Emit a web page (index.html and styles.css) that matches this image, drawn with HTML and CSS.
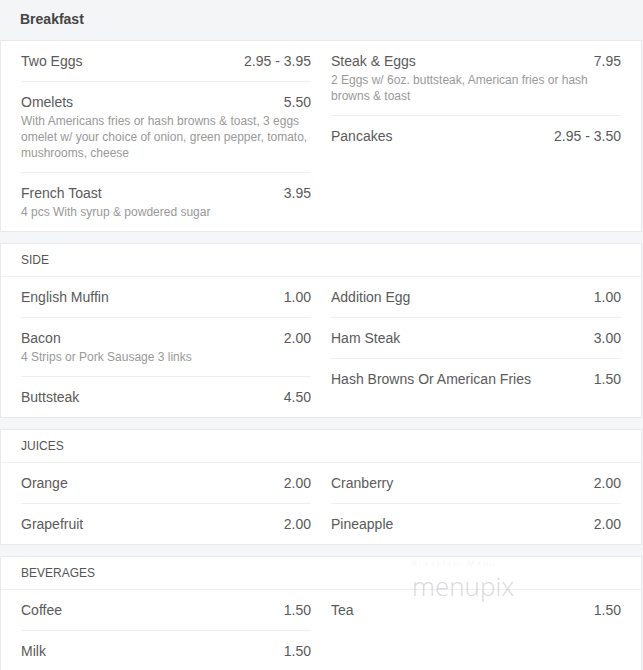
FILE: index.html
```html
<!DOCTYPE html>
<html lang="en">
<head>
<meta charset="utf-8">
<title>Breakfast Menu</title>
<link rel="stylesheet" href="styles.css">
</head>
<body>
<div class="menu">
  <div class="menu-title">Breakfast</div>

  <section class="card">
    <div class="grid">
      <div class="col">
        <div class="item"><div class="row"><span class="name">Two Eggs</span><span class="price">2.95 - 3.95</span></div></div>
        <div class="item"><div class="row"><span class="name">Omelets</span><span class="price">5.50</span></div><p class="desc">With Americans fries or hash browns &amp; toast, 3 eggs omelet w/ your choice of onion, green pepper, tomato, mushrooms, cheese</p></div>
        <div class="item"><div class="row"><span class="name">French Toast</span><span class="price">3.95</span></div><p class="desc">4 pcs With syrup &amp; powdered sugar</p></div>
      </div>
      <div class="col">
        <div class="item"><div class="row"><span class="name">Steak &amp; Eggs</span><span class="price">7.95</span></div><p class="desc">2 Eggs w/ 6oz. buttsteak, American fries or hash browns &amp; toast</p></div>
        <div class="item"><div class="row"><span class="name">Pancakes</span><span class="price">2.95 - 3.50</span></div></div>
      </div>
    </div>
  </section>

  <section class="card">
    <div class="card-head">SIDE</div>
    <div class="grid">
      <div class="col">
        <div class="item"><div class="row"><span class="name">English Muffin</span><span class="price">1.00</span></div></div>
        <div class="item"><div class="row"><span class="name">Bacon</span><span class="price">2.00</span></div><p class="desc">4 Strips or Pork Sausage 3 links</p></div>
        <div class="item"><div class="row"><span class="name">Buttsteak</span><span class="price">4.50</span></div></div>
      </div>
      <div class="col">
        <div class="item"><div class="row"><span class="name">Addition Egg</span><span class="price">1.00</span></div></div>
        <div class="item"><div class="row"><span class="name">Ham Steak</span><span class="price">3.00</span></div></div>
        <div class="item"><div class="row"><span class="name">Hash Browns Or American Fries</span><span class="price">1.50</span></div></div>
      </div>
    </div>
  </section>

  <section class="card">
    <div class="card-head">JUICES</div>
    <div class="grid">
      <div class="col">
        <div class="item"><div class="row"><span class="name">Orange</span><span class="price">2.00</span></div></div>
        <div class="item"><div class="row"><span class="name">Grapefruit</span><span class="price">2.00</span></div></div>
      </div>
      <div class="col">
        <div class="item"><div class="row"><span class="name">Cranberry</span><span class="price">2.00</span></div></div>
        <div class="item"><div class="row"><span class="name">Pineapple</span><span class="price">2.00</span></div></div>
      </div>
    </div>
  </section>

  <section class="card card-last">
    <div class="card-head">BEVERAGES</div>
    <div class="grid">
      <div class="col">
        <div class="item"><div class="row"><span class="name">Coffee</span><span class="price">1.50</span></div></div>
        <div class="item"><div class="row"><span class="name">Milk</span><span class="price">1.50</span></div></div>
      </div>
      <div class="col">
        <div class="item"><div class="row"><span class="name">Tea</span><span class="price">1.50</span></div></div>
      </div>
    </div>
    <div class="watermark" aria-hidden="true">
      <span class="wm-top">Breakfast Menu</span>
      <span class="wm-logo">menupix</span>
    </div>
  </section>
</div>
</body>
</html>
```

FILE: styles.css
```css
* { box-sizing: border-box; }

html, body {
  margin: 0;
  padding: 0;
  background: #f5f6f8;
}

body {
  font-family: "Liberation Sans", Arial, sans-serif;
  color: #555;
  width: 643px;
  height: 670px;
  overflow: hidden;
}

.menu {
  display: flex;
  flex-direction: column;
  width: 642px;
}

.menu-title {
  height: 40px;
  padding: 11px 20px 0;
  font-size: 14px;
  line-height: 17px;
  font-weight: bold;
  color: #444;
  background: #f4f5f7;
}

.card {
  position: relative;
  background: #fff;
  border: 1px solid #e8e9ed;
  margin-bottom: 11px;
}

.card-head {
  padding: 9px 20px 9px;
  font-size: 12px;
  line-height: 14px;
  color: #555;
  border-bottom: 1px solid #eeeff2;
}

.grid {
  display: grid;
  grid-template-columns: 1fr 1fr;
  column-gap: 20px;
  padding: 0 20px;
}

.col {
  display: flex;
  flex-direction: column;
}

.item {
  padding: 10px 0;
  border-bottom: 1px solid #eeeff2;
}

.item:last-child {
  border-bottom: none;
}

.row {
  display: flex;
  justify-content: space-between;
  align-items: baseline;
  font-size: 14px;
  line-height: 20px;
  color: #5a5a5a;
}

.price {
  color: #5a5a5a;
  white-space: nowrap;
  margin-left: 12px;
}

.desc {
  margin: 1px 0;
  font-size: 12px;
  line-height: 16px;
  color: #999;
}

.watermark {
  position: absolute;
  left: 411px;
  top: 0;
  display: flex;
  flex-direction: column;
  pointer-events: none;
}

.wm-top {
  font-family: "Open Sans", sans-serif;
  font-weight: 300;
  font-size: 8px;
  letter-spacing: 2px;
  color: rgba(200, 200, 205, 0.3);
  line-height: 11px;
}

.wm-logo {
  font-family: "Open Sans", sans-serif;
  font-weight: 300;
  font-size: 26px;
  line-height: 36px;
  letter-spacing: 0;
  color: rgba(185, 185, 190, 0.55);
}
```
